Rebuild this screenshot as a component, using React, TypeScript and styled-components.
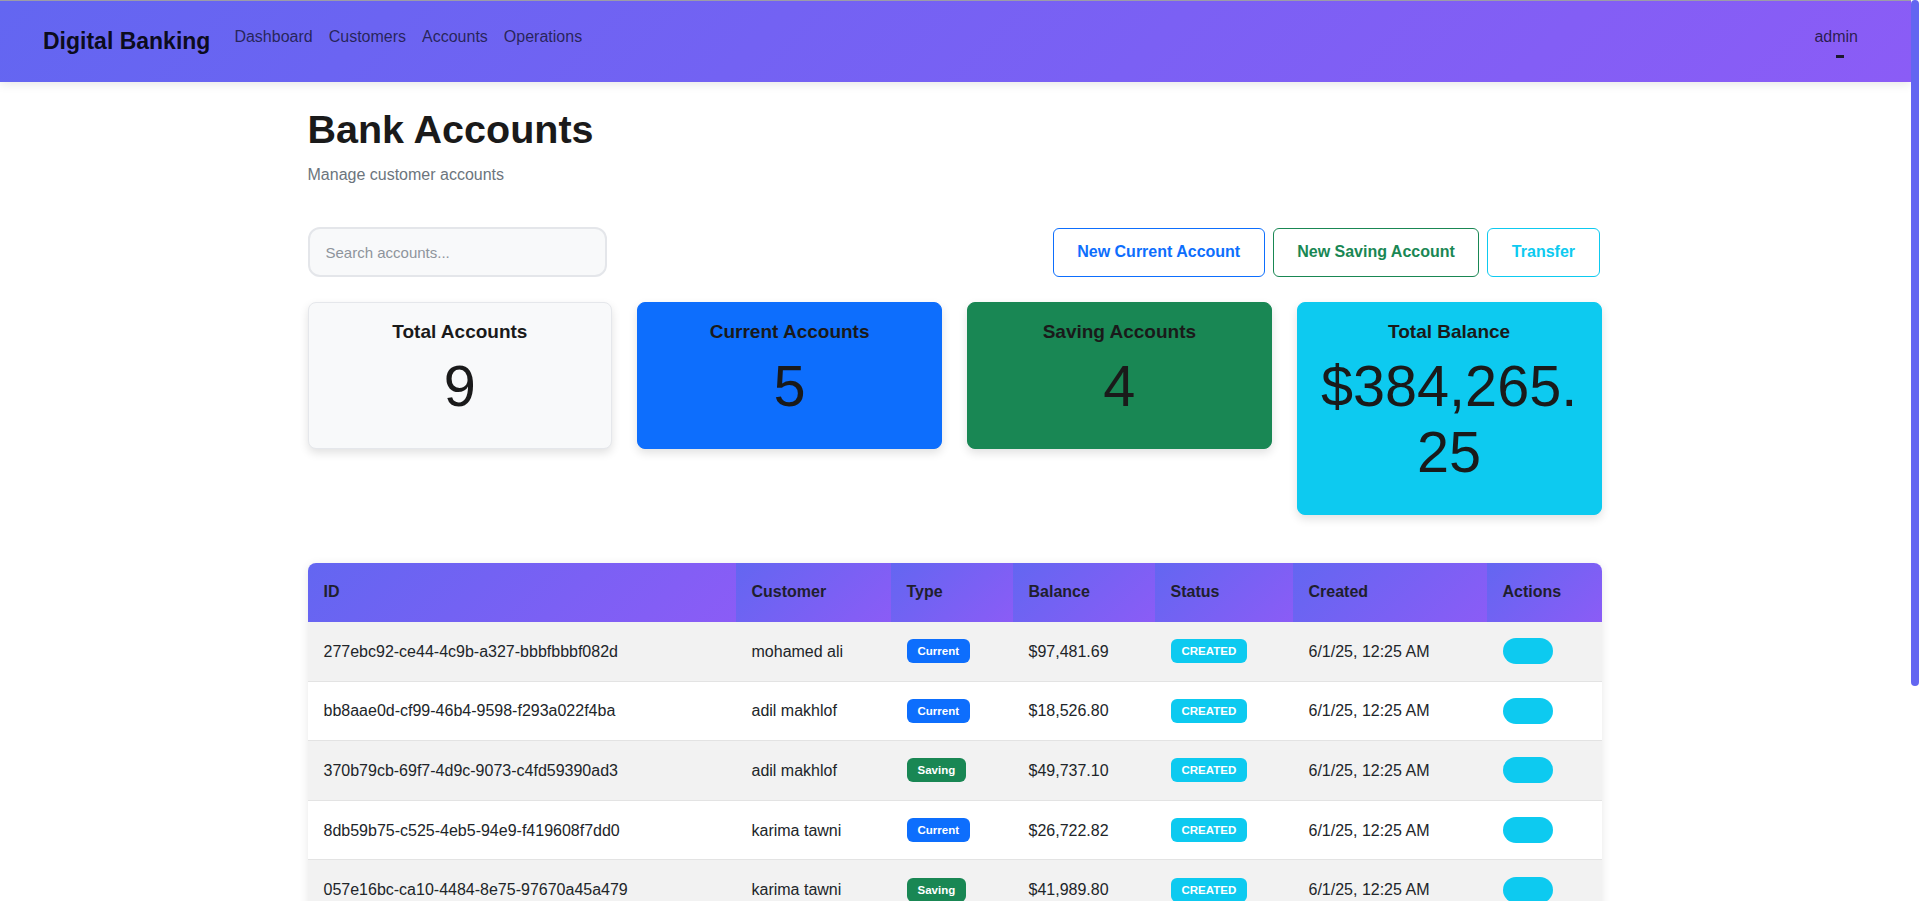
import React from "react";
import styled, { createGlobalStyle } from "styled-components";

const GlobalStyle = createGlobalStyle`
  html, body { margin: 0; padding: 0; height: 100%; overflow: hidden; background: #ffffff; }
  body {
    font-family: "Liberation Sans", Arial, Helvetica, sans-serif;
    color: #212529;
  }
  * { box-sizing: border-box; }
`;

const Shell = styled.div`
  display: flex;
  height: 100vh;
`;

const Page = styled.div`
  flex: 1;
  min-width: 0;
  overflow-y: auto;
  scrollbar-width: none;
  &::-webkit-scrollbar { display: none; }
`;

const ScrollRail = styled.div`
  flex: none;
  width: 8px;
  background: #ffffff;
`;

const ScrollThumb = styled.div`
  height: 686px;
  border-radius: 4px;
  background: #6366f1;
`;

const Header = styled.header`
  height: 82px;
  border-top: 1px solid #9c9ca8;
  background: linear-gradient(135deg, #6366f1 0%, #8b5cf6 100%);
  box-shadow: 0 2px 10px rgba(0, 0, 0, 0.1);
  display: flex;
  align-items: flex-start;
  padding: 0 53px 0 43px;
`;

const Brand = styled.div`
  margin-top: 27px;
  margin-right: 16px;
  font-size: 23px;
  line-height: 27.6px;
  font-weight: 700;
  color: rgba(0, 0, 0, 0.9);
  white-space: nowrap;
`;

const Nav = styled.nav`
  display: flex;
  margin-top: 24px;
`;

const NavLink = styled.a`
  padding: 0 8px;
  font-size: 16px;
  line-height: 24px;
  color: rgba(0, 0, 0, 0.65);
  text-decoration: none;
`;

const UserBox = styled.div`
  margin-left: auto;
  margin-top: 24px;
  display: flex;
  flex-direction: column;
  align-items: center;
`;

const UserName = styled.span`
  font-size: 16px;
  line-height: 24px;
  color: rgba(0, 0, 0, 0.7);
`;

const Caret = styled.span`
  display: block;
  width: 8px;
  height: 3px;
  margin-top: 6px;
  margin-left: 7px;
  background: #1c1830;
`;

const Main = styled.main`
  width: 1294px;
  margin: 0 0 0 calc(50% - 648px);
  padding: 23px 0 36px;
`;

const Title = styled.h1`
  margin: 0 0 9.5px;
  font-size: 39.5px;
  line-height: 48px;
  font-weight: 700;
  color: #1a1a1a;
`;

const Subtitle = styled.p`
  margin: 0 0 40.5px;
  font-size: 16px;
  line-height: 24px;
  color: #6c757d;
`;

const Toolbar = styled.div`
  display: flex;
  justify-content: space-between;
  align-items: center;
  margin-bottom: 24.5px;
`;

const Search = styled.input`
  width: 299px;
  height: 50px;
  padding: 0 16px;
  border: 2px solid #e4e6ea;
  border-radius: 12px;
  background: #f8f9fa;
  font-family: inherit;
  font-size: 15px;
  color: #212529;
  outline: none;
  &::placeholder { color: #8e949c; }
`;

const ButtonGroup = styled.div`
  display: flex;
  gap: 8px;
  padding-right: 2px;
`;

const OutlineButton = styled.button<{ $color: string }>`
  height: 49px;
  padding: 0 23.5px;
  border: 1px solid ${(p) => p.$color};
  border-radius: 6px;
  background: #ffffff;
  color: ${(p) => p.$color};
  font-family: inherit;
  font-size: 16px;
  font-weight: 700;
  cursor: pointer;
`;

const Stats = styled.div`
  display: grid;
  grid-template-columns: repeat(4, 1fr);
  gap: 25px;
  align-items: start;
  margin-bottom: 47.5px;
`;

const StatCard = styled.div<{ $bg: string; $border: string }>`
  background: ${(p) => p.$bg};
  border: 1px solid ${(p) => p.$border};
  border-radius: 8px;
  padding: 18px;
  text-align: center;
  box-shadow: 0 4px 10px rgba(0, 0, 0, 0.12);
`;

const StatTitle = styled.h3`
  margin: 0 0 10px;
  font-size: 19px;
  line-height: 22px;
  font-weight: 700;
  color: #1a1a1a;
`;

const StatValue = styled.p`
  margin: 0 0 11.5px;
  font-size: 57.6px;
  line-height: 66px;
  font-weight: 400;
  color: #1a1a1a;
  overflow-wrap: anywhere;
`;

const TableCard = styled.div`
  border-radius: 8px;
  overflow: hidden;
  background: #ffffff;
  box-shadow: 0 2px 10px rgba(0, 0, 0, 0.1);
`;

const Table = styled.table`
  width: 100%;
  border-collapse: collapse;
  table-layout: fixed;
`;

const HeadCell = styled.th`
  height: 59px;
  padding: 0 16px;
  text-align: left;
  vertical-align: middle;
  font-size: 16px;
  font-weight: 700;
  color: #1f1f2e;
  background: linear-gradient(135deg, #6366f1 0%, #8b5cf6 100%);
`;

const Row = styled.tr<{ $striped: boolean }>`
  background: ${(p) => (p.$striped ? "#f2f2f2" : "#ffffff")};
`;

const Cell = styled.td`
  height: 59.6px;
  padding: 0 16px;
  vertical-align: middle;
  font-size: 16px;
  line-height: 19px;
  color: #212529;
  border-bottom: 1px solid #e3e3e3;
  white-space: nowrap;
`;

const Badge = styled.span<{ $bg: string }>`
  display: inline-block;
  padding: 6px 11px;
  border-radius: 6px;
  background: ${(p) => p.$bg};
  color: #ffffff;
  font-size: 11.5px;
  line-height: 12px;
  font-weight: 700;
  vertical-align: middle;
`;

const ActionButton = styled.button`
  display: inline-block;
  width: 50px;
  height: 26px;
  border: none;
  border-radius: 13px;
  background: #0dcaf0;
  vertical-align: middle;
  cursor: pointer;
`;

const rows = [
  { id: "277ebc92-ce44-4c9b-a327-bbbfbbbf082d", customer: "mohamed ali", type: "Current", balance: "$97,481.69" },
  { id: "bb8aae0d-cf99-46b4-9598-f293a022f4ba", customer: "adil makhlof", type: "Current", balance: "$18,526.80" },
  { id: "370b79cb-69f7-4d9c-9073-c4fd59390ad3", customer: "adil makhlof", type: "Saving", balance: "$49,737.10" },
  { id: "8db59b75-c525-4eb5-94e9-f419608f7dd0", customer: "karima tawni", type: "Current", balance: "$26,722.82" },
  { id: "057e16bc-ca10-4484-8e75-97670a45a479", customer: "karima tawni", type: "Saving", balance: "$41,989.80" },
  { id: "a41c7e58-3b2d-4f61-9e0a-5d8c2b7f14e6", customer: "mohamed ali", type: "Saving", balance: "$52,310.45" },
  { id: "c9d2f6a1-7e84-4b3c-8a15-2f6e9d0b3c71", customer: "youssef idrissi", type: "Current", balance: "$31,204.67" },
  { id: "e5b83d90-1a6f-4c27-b4e8-73d1a9c5f208", customer: "youssef idrissi", type: "Saving", balance: "$44,860.12" },
  { id: "f02a6c4d-8b19-45e3-9d7a-c61b4e2a90f5", customer: "sara bennani", type: "Current", balance: "$21,431.80" },
];

const columns = [
  { label: "ID", width: 428 },
  { label: "Customer", width: 155 },
  { label: "Type", width: 122 },
  { label: "Balance", width: 142 },
  { label: "Status", width: 138 },
  { label: "Created", width: 194 },
  { label: "Actions", width: 115 },
];

const stats = [
  { title: "Total Accounts", value: "9", bg: "#f8f9fa", border: "#e5e7eb" },
  { title: "Current Accounts", value: "5", bg: "#0d6efd", border: "#0d6efd" },
  { title: "Saving Accounts", value: "4", bg: "#198754", border: "#198754" },
  { title: "Total Balance", value: "$384,265.25", bg: "#0dcaf0", border: "#0dcaf0" },
];

export default function App() {
  return (
    <>
      <GlobalStyle />
      <Shell>
        <Page>
          <Header>
            <Brand>Digital Banking</Brand>
            <Nav>
              <NavLink href="#">Dashboard</NavLink>
              <NavLink href="#">Customers</NavLink>
              <NavLink href="#">Accounts</NavLink>
              <NavLink href="#">Operations</NavLink>
            </Nav>
            <UserBox>
              <UserName>admin</UserName>
              <Caret />
            </UserBox>
          </Header>
          <Main>
            <Title>Bank Accounts</Title>
            <Subtitle>Manage customer accounts</Subtitle>
            <Toolbar>
              <Search placeholder="Search accounts..." />
              <ButtonGroup>
                <OutlineButton $color="#0d6efd">New Current Account</OutlineButton>
                <OutlineButton $color="#198754">New Saving Account</OutlineButton>
                <OutlineButton $color="#0dcaf0">Transfer</OutlineButton>
              </ButtonGroup>
            </Toolbar>
            <Stats>
              {stats.map((s) => (
                <StatCard key={s.title} $bg={s.bg} $border={s.border}>
                  <StatTitle>{s.title}</StatTitle>
                  <StatValue>{s.value}</StatValue>
                </StatCard>
              ))}
            </Stats>
            <TableCard>
              <Table>
                <colgroup>
                  {columns.map((c) => (
                    <col key={c.label} style={{ width: c.width }} />
                  ))}
                </colgroup>
                <thead>
                  <tr>
                    {columns.map((c) => (
                      <HeadCell key={c.label}>{c.label}</HeadCell>
                    ))}
                  </tr>
                </thead>
                <tbody>
                  {rows.map((r, i) => (
                    <Row key={r.id} $striped={i % 2 === 0}>
                      <Cell>{r.id}</Cell>
                      <Cell>{r.customer}</Cell>
                      <Cell>
                        <Badge $bg={r.type === "Current" ? "#0d6efd" : "#198754"}>{r.type}</Badge>
                      </Cell>
                      <Cell>{r.balance}</Cell>
                      <Cell>
                        <Badge $bg="#0dcaf0">CREATED</Badge>
                      </Cell>
                      <Cell>6/1/25, 12:25 AM</Cell>
                      <Cell>
                        <ActionButton aria-label="view" />
                      </Cell>
                    </Row>
                  ))}
                </tbody>
              </Table>
            </TableCard>
          </Main>
        </Page>
        <ScrollRail>
          <ScrollThumb />
        </ScrollRail>
      </Shell>
    </>
  );
}
